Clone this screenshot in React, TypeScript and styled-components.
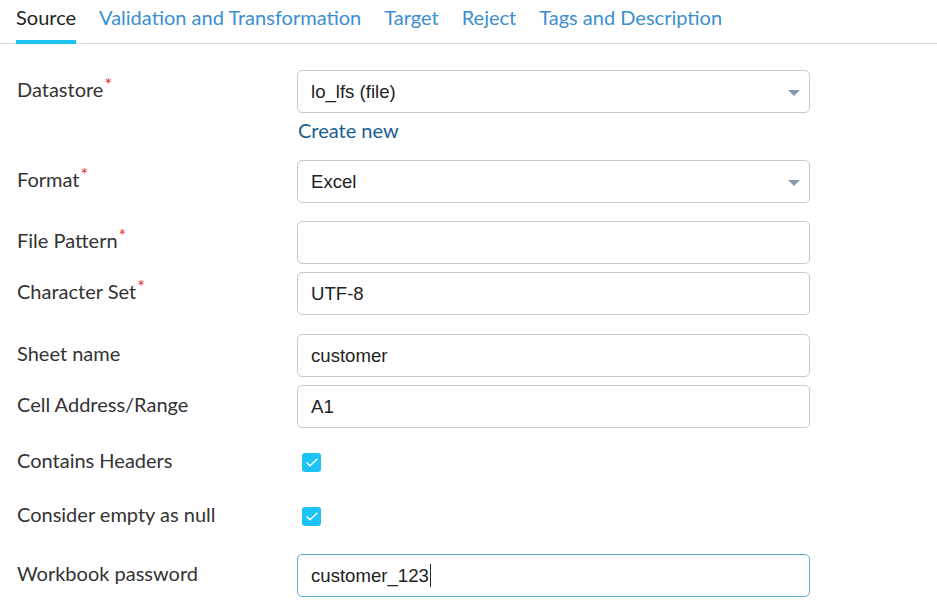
import React from "react";
import styled, { createGlobalStyle } from "styled-components";

const Global = createGlobalStyle`
  html, body { margin: 0; padding: 0; background: #fff; }
  body { font-family: Lato, "Open Sans", sans-serif; }
  * { box-sizing: border-box; }
`;

const Page = styled.div`
  width: 937px;
  height: 606px;
  overflow: hidden;
  background: #fff;
`;

const TabBar = styled.div`
  display: flex;
  gap: 23px;
  padding-left: 16px;
  border-bottom: 1px solid #dcdcdc;
  height: 44px;
`;

const Tab = styled.div<{ $active?: boolean }>`
  font-size: 20px;
  line-height: 1;
  padding-top: 7px;
  color: ${(p) => (p.$active ? "#222" : "#3b8fd1")};
  border-bottom: 4px solid ${(p) => (p.$active ? "#1ec2f2" : "transparent")};
  height: 44px;
`;

const Form = styled.div`
  display: flex;
  flex-direction: column;
  padding-left: 17px;
  padding-top: 26px;
`;

const Row = styled.div<{ $mt?: number }>`
  display: grid;
  grid-template-columns: 280px 513px;
  align-items: center;
  margin-top: ${(p) => p.$mt ?? 0}px;
`;

const Label = styled.div`
  font-size: 20px;
  line-height: 24px;
  padding-bottom: 5px;
  color: #333;
`;

const Req = styled.span`
  color: #e8262a;
  font-size: 18px;
  line-height: 0;
  position: relative;
  top: -6px;
  margin-left: 1px;
`;

const Field = styled.div<{ $focus?: boolean }>`
  height: 43px;
  border: 1px solid ${(p) => (p.$focus ? "#5ea8dc" : "#c3cbd6")};
  border-radius: 5px;
  display: flex;
  align-items: center;
  padding: 0 13px;
  font-family: "Liberation Sans", Arial, sans-serif;
  font-size: 18.6px;
  color: #222;
  position: relative;
`;

const Arrow = styled.span`
  position: absolute;
  right: 9px;
  top: 19px;
  width: 0;
  height: 0;
  border-left: 6px solid transparent;
  border-right: 6px solid transparent;
  border-top: 6px solid #8597ad;
`;

const Caret = styled.span`
  display: inline-block;
  width: 1px;
  height: 23px;
  background: #222;
  margin-left: 1px;
`;

const CreateLink = styled.div`
  grid-column: 2;
  font-size: 20px;
  line-height: 24px;
  height: 28px;
  color: #1b5e90;
  padding-top: 5px;
  padding-left: 1px;
`;

const Check = styled.div`
  width: 19px;
  height: 19px;
  border-radius: 3px;
  background: #1ec3f6;
  margin-left: 5px;
  display: flex;
  align-items: center;
  justify-content: center;
`;

const CheckBox = () => (
  <Check>
    <svg width="14" height="11" viewBox="0 0 14 11">
      <path d="M1.5 5.5 L5 8.8 L12.5 1.8" fill="none" stroke="#fff" strokeWidth="1.4" />
    </svg>
  </Check>
);

export default function App() {
  return (
    <Page>
      <Global />
      <TabBar>
        <Tab $active>Source</Tab>
        <Tab>Validation and Transformation</Tab>
        <Tab>Target</Tab>
        <Tab>Reject</Tab>
        <Tab>Tags and Description</Tab>
      </TabBar>
      <Form>
        <Row>
          <Label>
            Datastore<Req>*</Req>
          </Label>
          <Field>
            lo_lfs (file)
            <Arrow />
          </Field>
          <CreateLink>Create new</CreateLink>
        </Row>
        <Row $mt={19}>
          <Label>
            Format<Req>*</Req>
          </Label>
          <Field>
            Excel
            <Arrow />
          </Field>
        </Row>
        <Row $mt={18}>
          <Label>
            File Pattern<Req>*</Req>
          </Label>
          <Field />
        </Row>
        <Row $mt={8}>
          <Label>
            Character Set<Req>*</Req>
          </Label>
          <Field>UTF-8</Field>
        </Row>
        <Row $mt={19}>
          <Label>Sheet name</Label>
          <Field>customer</Field>
        </Row>
        <Row $mt={8}>
          <Label>Cell Address/Range</Label>
          <Field>A1</Field>
        </Row>
        <Row $mt={20}>
          <Label>Contains Headers</Label>
          <CheckBox />
        </Row>
        <Row $mt={25}>
          <Label>Consider empty as null</Label>
          <CheckBox />
        </Row>
        <Row $mt={23}>
          <Label>Workbook password</Label>
          <Field $focus>
            customer_123
            <Caret />
          </Field>
        </Row>
      </Form>
    </Page>
  );
}
